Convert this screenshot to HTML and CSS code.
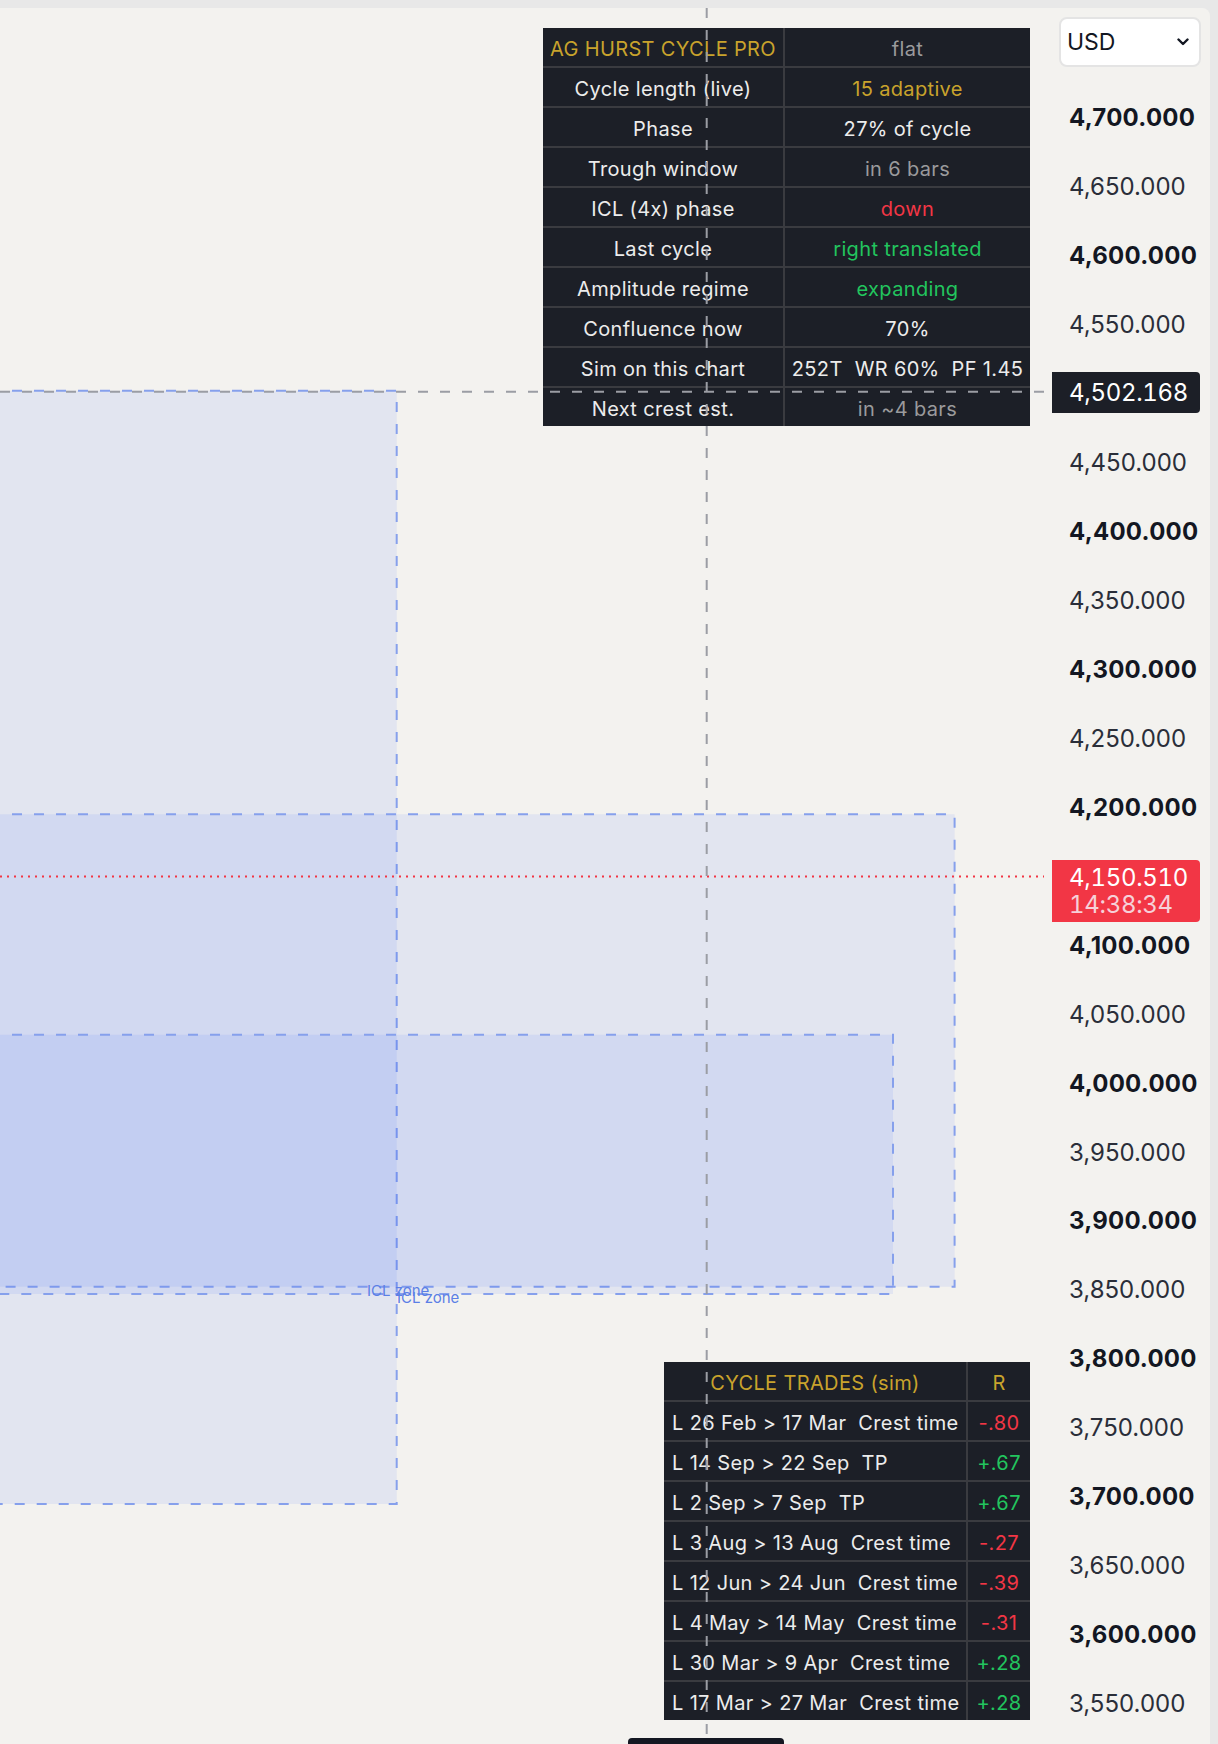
FILE: index.html
```html
<!DOCTYPE html>
<html lang="en">
<head>
<meta charset="utf-8">
<title>AG Hurst Cycle Pro</title>
<link rel="stylesheet" href="styles.css">
</head>
<body>
<div class="frame">
  <div class="panel">
    <div class="pane">
      <svg class="drawings" width="1044" height="1736" viewBox="0 0 1044 1736">
        <rect x="-10" y="382.7" width="406.7" height="1113.3" class="zone"/>
        <rect x="-10" y="806.3" width="964.6" height="472.4" class="zone"/>
        <rect x="-10" y="1026.7" width="903" height="259.3" class="zone"/>
        <line x1="0" y1="868.5" x2="1044" y2="868.5" class="lastline"/>
        <text x="367" y="1288" class="zonelabel">ICL zone</text>
        <text x="397" y="1295" class="zonelabel">ICL zone</text>
      </svg>

      <table class="hud hud-top">
        <colgroup><col class="c1"><col class="c2"></colgroup>
        <tr><td class="gold">AG HURST CYCLE PRO</td><td class="muted">flat</td></tr>
        <tr><td>Cycle length (live)</td><td class="gold">15 adaptive</td></tr>
        <tr><td>Phase</td><td>27% of cycle</td></tr>
        <tr><td>Trough window</td><td class="muted">in 6 bars</td></tr>
        <tr><td>ICL (4x) phase</td><td class="neg">down</td></tr>
        <tr><td>Last cycle</td><td class="pos">right translated</td></tr>
        <tr><td>Amplitude regime</td><td class="pos">expanding</td></tr>
        <tr><td>Confluence now</td><td>70%</td></tr>
        <tr><td>Sim on this chart</td><td>252T  WR 60%  PF 1.45</td></tr>
        <tr><td>Next crest est.</td><td class="muted">in ~4 bars</td></tr>
      </table>

      <table class="hud hud-trades">
        <colgroup><col class="t1"><col class="t2"></colgroup>
        <tr><td class="gold">CYCLE TRADES (sim)</td><td class="gold">R</td></tr>
        <tr><td class="left">L 26 Feb &gt; 17 Mar  Crest time</td><td class="neg">-.80</td></tr>
        <tr><td class="left">L 14 Sep &gt; 22 Sep  TP</td><td class="pos">+.67</td></tr>
        <tr><td class="left">L 2 Sep &gt; 7 Sep  TP</td><td class="pos">+.67</td></tr>
        <tr><td class="left">L 3 Aug &gt; 13 Aug  Crest time</td><td class="neg">-.27</td></tr>
        <tr><td class="left">L 12 Jun &gt; 24 Jun  Crest time</td><td class="neg">-.39</td></tr>
        <tr><td class="left">L 4 May &gt; 14 May  Crest time</td><td class="neg">-.31</td></tr>
        <tr><td class="left">L 30 Mar &gt; 9 Apr  Crest time</td><td class="pos">+.28</td></tr>
        <tr><td class="left">L 17 Mar &gt; 27 Mar  Crest time</td><td class="pos">+.28</td></tr>
      </table>

      <svg class="crosshair" width="1044" height="1736" viewBox="0 0 1044 1736">
        <line x1="706.7" y1="0" x2="706.7" y2="1736" class="cross"/>
        <line x1="0" y1="383.7" x2="1044" y2="383.7" class="cross"/>
      </svg>
      <div class="timetag"></div>
    </div>

    <div class="scale">
      <div class="ccy"><span>USD</span>
        <svg class="chev" width="12" height="8" viewBox="0 0 12 8"><polyline points="1.5,1.5 6,6 10.5,1.5"/></svg>
      </div>
      <div class="ticks">
        <div class="tick major">4,700.000</div>
        <div class="tick">4,650.000</div>
        <div class="tick major">4,600.000</div>
        <div class="tick">4,550.000</div>
        <div class="tick major hidden">4,500.000</div>
        <div class="tick">4,450.000</div>
        <div class="tick major">4,400.000</div>
        <div class="tick">4,350.000</div>
        <div class="tick major">4,300.000</div>
        <div class="tick">4,250.000</div>
        <div class="tick major">4,200.000</div>
        <div class="tick hidden">4,150.000</div>
        <div class="tick major">4,100.000</div>
        <div class="tick">4,050.000</div>
        <div class="tick major">4,000.000</div>
        <div class="tick">3,950.000</div>
        <div class="tick major">3,900.000</div>
        <div class="tick">3,850.000</div>
        <div class="tick major">3,800.000</div>
        <div class="tick">3,750.000</div>
        <div class="tick major">3,700.000</div>
        <div class="tick">3,650.000</div>
        <div class="tick major">3,600.000</div>
        <div class="tick">3,550.000</div>
      </div>
      <div class="tag tag-cross">4,502.168</div>
      <div class="tag tag-last"><span>4,150.510</span><span class="countdown">14:38:34</span></div>
    </div>
  </div>
</div>
</body>
</html>
```

FILE: styles.css
```css
html, body {
  margin: 0;
  padding: 0;
}
body {
  background: #e8e8e8;
  font-family: Inter, "Noto Sans", sans-serif;
}
.frame {
  height: 1744px;
  padding: 8px 8px 0 0;
  box-sizing: border-box;
}
.panel {
  display: flex;
  height: 1736px;
  background: #f3f2ef;
  border-top-right-radius: 8px;
  overflow: hidden;
}
.pane {
  position: relative;
  flex: none;
  width: 1044px;
  height: 1736px;
}
.drawings, .crosshair {
  position: absolute;
  left: 0;
  top: 0;
  pointer-events: none;
}
.drawings { z-index: 1; }
.crosshair { z-index: 3; }
.zone {
  fill: rgba(41, 98, 255, 0.085);
  stroke: #86a0ec;
  stroke-width: 2;
  stroke-dasharray: 10 12;
}
.lastline {
  stroke: #f23645;
  stroke-width: 2;
  stroke-dasharray: 2 5;
}
.zonelabel {
  font-family: Inter, "Noto Sans", sans-serif;
  font-size: 15px;
  fill: #5b7fe6;
}
.cross {
  stroke: #9b9da4;
  stroke-width: 2;
  stroke-dasharray: 10 12;
}
.timetag {
  position: absolute;
  z-index: 4;
  left: 628px;
  top: 1730px;
  width: 156px;
  height: 12px;
  background: #131722;
  border-radius: 4px 4px 0 0;
}

/* tables */
.hud {
  position: absolute;
  z-index: 2;
  border-collapse: separate;
  border-spacing: 0;
  table-layout: fixed;
  background: #1c1f27;
  color: #ececec;
  font-size: 20px;
  letter-spacing: 0.35px;
}
.hud td {
  height: 35px;
  padding: 3px 0 0 0;
  border-bottom: 2px solid #3a3b40;
  text-align: center;
  vertical-align: middle;
  white-space: pre;
  overflow: hidden;
}
.hud tr:last-child td { border-bottom: none; }
.hud td + td { border-left: 2px solid #3a3b40; }
.hud-top {
  left: 543px;
  top: 20px;
  width: 487px;
}
.hud-top .c1 { width: 240px; }
.hud-top .c2 { width: 247px; }
.hud-trades {
  left: 664px;
  top: 1354px;
  width: 366px;
}
.hud-trades .t1 { width: 302px; }
.hud-trades .t2 { width: 64px; }
.hud td.left { text-align: left; padding-left: 8px; }
.gold { color: #c9a32c; }
.muted { color: #9a9a9c; }
.neg { color: #f23645; }
.pos { color: #22c55e; }

/* price scale */
.scale {
  position: relative;
  flex: 1;
  display: flex;
  flex-direction: column;
}
.ccy {
  margin: 8.7px 9px 0 15px;
  height: 50px;
  box-sizing: border-box;
  background: #ffffff;
  border: 2px solid #e4e4e4;
  border-radius: 8px;
  display: flex;
  align-items: center;
  justify-content: space-between;
  padding: 0 10px 0 6px;
  font-size: 23px;
  color: #131722;
}
.chev polyline {
  fill: none;
  stroke: #131722;
  stroke-width: 2.4;
  stroke-linecap: round;
  stroke-linejoin: round;
}
.ticks {
  margin-top: 16.3px;
  display: flex;
  flex-direction: column;
}
.tick {
  height: 68.97px;
  display: flex;
  align-items: center;
  padding-left: 25px;
  font-size: 24px;
  color: #2a2e39;
}
.tick.major {
  font-weight: 700;
  color: #131722;
  letter-spacing: 0.25px;
}
.tick.hidden { visibility: hidden; }
.tag {
  position: absolute;
  left: 8px;
  width: 148px;
  box-sizing: border-box;
  padding-left: 17px;
  border-radius: 0 4px 4px 0;
  color: #ffffff;
  font-size: 24px;
  font-variant-numeric: tabular-nums;
  letter-spacing: -0.3px;
}
.tag-cross {
  top: 363.7px;
  height: 41px;
  line-height: 41px;
  background: #1c1f27;
}
.tag-last {
  top: 852px;
  height: 62px;
  background: #f23645;
  display: flex;
  flex-direction: column;
  justify-content: center;
  line-height: 27px;
}
.countdown { color: #f6d0d8; }
```
